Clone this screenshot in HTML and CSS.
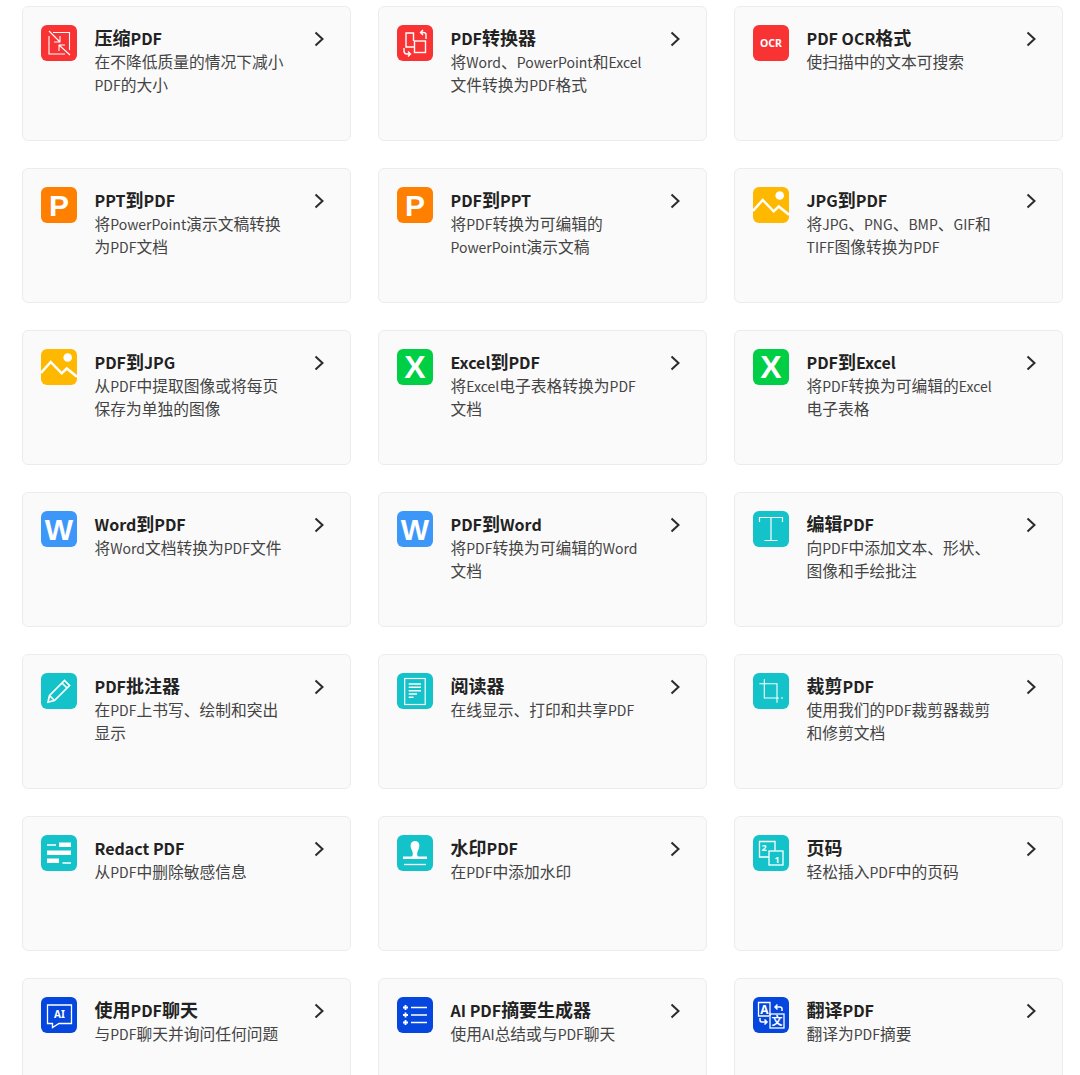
FILE: index.html
```html
<!DOCTYPE html>
<html lang="zh-CN">
<head>
<meta charset="utf-8">
<title>PDF 工具</title>
<link rel="stylesheet" href="styles.css">
</head>
<body>
<svg class="defs" width="0" height="0" aria-hidden="true">
  <symbol id="chev" viewBox="0 0 24 24"><path d="M8.500 5.500 15.500 12 8.500 18.500" fill="none" stroke="currentColor" stroke-width="2"/></symbol>
  <symbol id="img" viewBox="0 0 36 36"><rect class="yellow" width="36" height="36" rx="6"/><circle cx="26.700" cy="8.500" r="4.300" fill="#fff"/><path d="M0 24 9.700 13 20.700 24.300 25.700 19.500 36 27.700" fill="none" stroke="#fff" stroke-width="2.500"/></symbol>
</svg>
<main class="grid">

<a class="card"><svg class="icon" viewBox="0 0 36 36"><rect class="red" width="36" height="36" rx="6"/><g fill="none" stroke="#fff" stroke-width="1.100"><path d="M12 7.500H28.500V25M8 11V29H24"/><path d="M8 6 19 17M19 11V17H13M29 30 18 20M18 26V20H24"/></g></svg>
<div class="body"><h3>压缩<span class="en">PDF</span></h3><p>在不降低质量的情况下减小<span class="en">PDF</span>的大小</p></div><svg class="chev"><use href="#chev"/></svg></a>

<a class="card"><svg class="icon" viewBox="0 0 36 36"><rect class="red" width="36" height="36" rx="6"/><g fill="none" stroke="#fff" stroke-width="1.400"><path d="M16.500 16V8H9V22H17"/><rect x="17.500" y="16" width="11" height="11.500"/><path d="M29 14V9.500Q29 7.500 26 7.500H24M26 5 23.500 7.500 26 10M7 23V26Q7 29 10 29H13M11 26.500 13.500 29 11 31.500"/></g></svg>
<div class="body"><h3><span class="en">PDF</span>转换器</h3><p>将<span class="en">Word</span>、<span class="en">PowerPoint</span>和<span class="en">Excel</span>文件转换为<span class="en">PDF</span>格式</p></div><svg class="chev"><use href="#chev"/></svg></a>

<a class="card"><svg class="icon" viewBox="0 0 36 36"><rect class="red" width="36" height="36" rx="6"/><text class="ocr" x="18" y="22" text-anchor="middle">OCR</text></svg>
<div class="body"><h3><span class="en">PDF OCR</span>格式</h3><p>使扫描中的文本可搜索</p></div><svg class="chev"><use href="#chev"/></svg></a>

<a class="card"><svg class="icon" viewBox="0 0 36 36"><rect class="orange" width="36" height="36" rx="6"/><text class="glyph" x="18" y="29" font-size="30" text-anchor="middle">P</text></svg>
<div class="body"><h3><span class="en">PPT</span>到<span class="en">PDF</span></h3><p>将<span class="en">PowerPoint</span>演示文稿转换为<span class="en">PDF</span>文档</p></div><svg class="chev"><use href="#chev"/></svg></a>

<a class="card"><svg class="icon" viewBox="0 0 36 36"><rect class="orange" width="36" height="36" rx="6"/><text class="glyph" x="18" y="29" font-size="30" text-anchor="middle">P</text></svg>
<div class="body"><h3><span class="en">PDF</span>到<span class="en">PPT</span></h3><p>将<span class="en">PDF</span>转换为可编辑的<span class="en">PowerPoint</span>演示文稿</p></div><svg class="chev"><use href="#chev"/></svg></a>

<a class="card"><svg class="icon"><use href="#img"/></svg>
<div class="body"><h3><span class="en">JPG</span>到<span class="en">PDF</span></h3><p>将<span class="en">JPG</span>、<span class="en">PNG</span>、<span class="en">BMP</span>、<span class="en">GIF</span>和<span class="en">TIFF</span>图像转换为<span class="en">PDF</span></p></div><svg class="chev"><use href="#chev"/></svg></a>

<a class="card"><svg class="icon"><use href="#img"/></svg>
<div class="body"><h3><span class="en">PDF</span>到<span class="en">JPG</span></h3><p>从<span class="en">PDF</span>中提取图像或将每页保存为单独的图像</p></div><svg class="chev"><use href="#chev"/></svg></a>

<a class="card"><svg class="icon" viewBox="0 0 36 36"><rect class="green" width="36" height="36" rx="6"/><text class="glyph" x="18" y="29" font-size="32" text-anchor="middle">X</text></svg>
<div class="body"><h3><span class="en">Excel</span>到<span class="en">PDF</span></h3><p>将<span class="en">Excel</span>电子表格转换为<span class="en">PDF</span>文档</p></div><svg class="chev"><use href="#chev"/></svg></a>

<a class="card"><svg class="icon" viewBox="0 0 36 36"><rect class="green" width="36" height="36" rx="6"/><text class="glyph" x="18" y="29" font-size="32" text-anchor="middle">X</text></svg>
<div class="body"><h3><span class="en">PDF</span>到<span class="en">Excel</span></h3><p>将<span class="en">PDF</span>转换为可编辑的<span class="en">Excel</span>电子表格</p></div><svg class="chev"><use href="#chev"/></svg></a>

<a class="card"><svg class="icon" viewBox="0 0 36 36"><rect class="blue" width="36" height="36" rx="6"/><text class="glyph" x="18" y="29" font-size="30" text-anchor="middle">W</text></svg>
<div class="body"><h3><span class="en">Word</span>到<span class="en">PDF</span></h3><p>将<span class="en">Word</span>文档转换为<span class="en">PDF</span>文件</p></div><svg class="chev"><use href="#chev"/></svg></a>

<a class="card"><svg class="icon" viewBox="0 0 36 36"><rect class="blue" width="36" height="36" rx="6"/><text class="glyph" x="18" y="29" font-size="30" text-anchor="middle">W</text></svg>
<div class="body"><h3><span class="en">PDF</span>到<span class="en">Word</span></h3><p>将<span class="en">PDF</span>转换为可编辑的<span class="en">Word</span>文档</p></div><svg class="chev"><use href="#chev"/></svg></a>

<a class="card"><svg class="icon" viewBox="0 0 36 36"><rect class="teal" width="36" height="36" rx="6"/><path d="M6.500 11V6.500H29.500V11M18 6.500V29.500M11.500 29.500H24.500" fill="none" stroke="#fff" stroke-width="1.200"/></svg>
<div class="body"><h3>编辑<span class="en">PDF</span></h3><p>向<span class="en">PDF</span>中添加文本、形状、图像和手绘批注</p></div><svg class="chev"><use href="#chev"/></svg></a>

<a class="card"><svg class="icon" viewBox="0 0 36 36"><rect class="teal" width="36" height="36" rx="6"/><g fill="none" stroke="#fff" stroke-width="1.700"><path d="M8.500 22.500 23.500 7.500 28.500 12.500 13.500 27.500 7 29Z"/><path d="M21 10 26 15M8.500 22.500 13.500 27.500"/></g></svg>
<div class="body"><h3><span class="en">PDF</span>批注器</h3><p>在<span class="en">PDF</span>上书写、绘制和突出显示</p></div><svg class="chev"><use href="#chev"/></svg></a>

<a class="card"><svg class="icon" viewBox="0 0 36 36"><rect class="teal" width="36" height="36" rx="6"/><rect x="7.700" y="5.500" width="20.500" height="26" fill="none" stroke="#fff" stroke-width="1.200"/><path d="M11.700 11H24M11.700 14.300H24M11.700 17.700H24M11.700 21H20M11.700 24.300H16.500" fill="none" stroke="#fff" stroke-width="1.500"/></svg>
<div class="body"><h3>阅读器</h3><p>在线显示、打印和共享<span class="en">PDF</span></p></div><svg class="chev"><use href="#chev"/></svg></a>

<a class="card"><svg class="icon" viewBox="0 0 36 36"><rect class="teal" width="36" height="36" rx="6"/><path d="M6.300 10.700H24V29.700M11.300 6.300V25H26M28 25H30" fill="none" stroke="#fff" stroke-width="1.100"/></svg>
<div class="body"><h3>裁剪<span class="en">PDF</span></h3><p>使用我们的<span class="en">PDF</span>裁剪器裁剪和修剪文档</p></div><svg class="chev"><use href="#chev"/></svg></a>

<a class="card"><svg class="icon" viewBox="0 0 36 36"><rect class="teal" width="36" height="36" rx="6"/><path d="M6 10H15M21.500 28H30" fill="none" stroke="#fff" stroke-width="1.300"/><path d="M18 7.500H30V12H18ZM6 15.500H30V20H6ZM6 23.500H18V28H6Z" fill="#fff"/></svg>
<div class="body"><h3><span class="en">Redact PDF</span></h3><p>从<span class="en">PDF</span>中删除敏感信息</p></div><svg class="chev"><use href="#chev"/></svg></a>

<a class="card"><svg class="icon" viewBox="0 0 36 36"><rect class="teal" width="36" height="36" rx="6"/><path d="M6 24V21.500H14.500C16.500 21 16 17 14.500 14.500 12.500 10 14 6 18 6S23.500 10 21.500 14.500C20 17 19.500 21 21.500 21.500H30V24Z" fill="#fff"/><path d="M7 29.500H29" stroke="#fff" stroke-width="1.300"/></svg>
<div class="body"><h3>水印<span class="en">PDF</span></h3><p>在<span class="en">PDF</span>中添加水印</p></div><svg class="chev"><use href="#chev"/></svg></a>

<a class="card"><svg class="icon" viewBox="0 0 36 36"><rect class="teal" width="36" height="36" rx="6"/><g fill="none" stroke="#fff" stroke-width="1.300"><path d="M16 22H6.500V6.500H22V15.500"/><rect x="16" y="16" width="14" height="14"/></g><text class="num" x="11" y="16" text-anchor="middle">2</text><text class="num" x="24" y="28" text-anchor="middle">1</text></svg>
<div class="body"><h3>页码</h3><p>轻松插入<span class="en">PDF</span>中的页码</p></div><svg class="chev"><use href="#chev"/></svg></a>

<a class="card"><svg class="icon" viewBox="0 0 36 36"><rect class="navy" width="36" height="36" rx="6"/><path d="M6.500 8H30.500V26.500H18L11.500 30.500V26.500H6.500Z" fill="none" stroke="#fff" stroke-width="1.300"/><text class="ai" x="18.500" y="21" text-anchor="middle">AI</text></svg>
<div class="body"><h3>使用<span class="en">PDF</span>聊天</h3><p>与<span class="en">PDF</span>聊天并询问任何问题</p></div><svg class="chev"><use href="#chev"/></svg></a>

<a class="card"><svg class="icon" viewBox="0 0 36 36"><rect class="navy" width="36" height="36" rx="6"/><path d="M14 10.500H30M14 18H30M14 25.500H30" stroke="#fff" stroke-width="1.400"/><path d="M6 10.500H11M8.500 8V13M6 18H11M8.500 15.500V20.500M6 25.500H11M8.500 23V28" stroke="#fff" stroke-width="1.800"/></svg>
<div class="body"><h3><span class="en">AI PDF</span>摘要生成器</h3><p>使用<span class="en">AI</span>总结或与<span class="en">PDF</span>聊天</p></div><svg class="chev"><use href="#chev"/></svg></a>

<a class="card"><svg class="icon" viewBox="0 0 36 36"><rect class="navy" width="36" height="36" rx="6"/><g fill="none" stroke="#fff" stroke-width="1.300"><path d="M17 19V5.500H5.500V19H16"/><rect x="17" y="17" width="14" height="14"/></g><text class="num big" x="11.500" y="16.500" text-anchor="middle">A</text><text class="num cn" x="24" y="28" text-anchor="middle">文</text><path d="M29 14V12Q29 10 27 10H22M24.500 7.500 22 10 24.500 12.500M7 21V23Q7 25 9 25H14M11.500 22.500 14 25 11.500 27.500" fill="none" stroke="#fff" stroke-width="1.500"/></svg>
<div class="body"><h3>翻译<span class="en">PDF</span></h3><p>翻译为<span class="en">PDF</span>摘要</p></div><svg class="chev"><use href="#chev"/></svg></a>

</main>
</body>
</html>
```

FILE: styles.css
```css
html, body {
  margin: 0;
  height: 100%;
  overflow: hidden;
  background: #fff;
}

body {
  font-family: "Noto Sans CJK SC", sans-serif;
  color: #333;
}

.defs {
  position: absolute;
}

.grid {
  display: grid;
  grid-template-columns: repeat(3, 329px);
  grid-auto-rows: 135px;
  gap: 27px;
  padding: 6px 0 0 22px;
}

.card {
  display: flex;
  align-items: flex-start;
  box-sizing: border-box;
  padding: 18px 19px 17px 18px;
  background: #fafafa;
  border: 1px solid #ececec;
  border-radius: 6px;
}

.icon {
  flex: none;
  width: 36px;
  height: 36px;
  margin-right: 17.5px;
}

.body {
  width: 193px;
  padding-top: 2px;
}

h3 {
  margin: -1px 0 1px;
  font-size: 18px;
  line-height: 23px;
  font-weight: 700;
  color: #222;
}

h3 .en {
  font-size: 16px;
}

p {
  margin: 0;
  font-size: 15.75px;
  line-height: 23px;
  font-weight: 400;
  color: #444;
}

p .en {
  font-size: 14px;
}

.en {
  line-height: 1;
}

.chev {
  flex: none;
  width: 24px;
  height: 24px;
  margin: 2px 0 0 auto;
  color: #2b2b2b;
}

.red { fill: #f93234; }
.orange { fill: #ff7f00; }
.yellow { fill: #ffb800; }
.green { fill: #00cf46; }
.blue { fill: #3d97f8; }
.teal { fill: #13c3c9; }
.navy { fill: #0546de; }

.glyph {
  font-family: "Liberation Sans", sans-serif;
  font-weight: 700;
  fill: #fff;
}

.ocr {
  font-family: "Noto Sans", sans-serif;
  font-size: 10.5px;
  font-weight: 700;
  fill: #fff;
}

.ai {
  font-family: "Noto Sans", sans-serif;
  font-size: 10px;
  font-weight: 700;
  fill: #fff;
}

.num {
  font-family: "Noto Sans", sans-serif;
  font-size: 9px;
  font-weight: 700;
  fill: #fff;
}

.big {
  font-size: 12px;
}

.cn {
  font-family: "Noto Sans CJK SC", sans-serif;
  font-size: 11px;
}
```
